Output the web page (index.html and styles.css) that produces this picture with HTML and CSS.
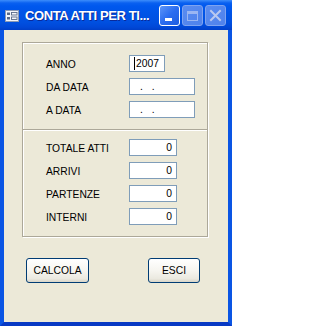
FILE: index.html
```html
<!DOCTYPE html>
<html>
<head>
<meta charset="utf-8">
<link rel="stylesheet" href="styles.css">
</head>
<body>
<div class="window">
  <div class="titlebar">
    <svg class="app-icon" width="14" height="12" viewBox="0 0 14 12">
      <rect x="0.5" y="0.5" width="13" height="11" fill="#f4f6fb" stroke="#8c9ab4"/>
      <rect x="2" y="2.5" width="3" height="2.5" fill="#5a6a88"/>
      <rect x="6.5" y="2.5" width="5.5" height="2.5" fill="none" stroke="#5a6a88" stroke-width="0.9"/>
      <rect x="2" y="7" width="3" height="2.5" fill="#5a6a88"/>
      <rect x="6.5" y="7" width="5.5" height="2.5" fill="none" stroke="#5a6a88" stroke-width="0.9"/>
    </svg>
    <span class="title">CONTA ATTI PER TI...</span>
    <div class="ctrls">
      <span class="ctrl ctrl-min"><span class="min-bar"></span></span>
      <span class="ctrl ctrl-off"><span class="max-box"></span></span>
      <span class="ctrl ctrl-off">
        <svg width="13" height="13" viewBox="0 0 13 13"><path d="M2 2 L11 11 M11 2 L2 11" stroke="#b9c8ef" stroke-width="2" stroke-linecap="square"/></svg>
      </span>
    </div>
  </div>
  <div class="client">
    <div class="frame">
      <div class="section">
        <div class="row"><span class="lbl">ANNO</span><span class="box box-year"><span class="caret"></span>2007</span></div>
        <div class="row"><span class="lbl">DA DATA</span><span class="box box-date">. .</span></div>
        <div class="row"><span class="lbl">A DATA</span><span class="box box-date">. .</span></div>
      </div>
      <div class="section section-sep">
        <div class="row"><span class="lbl">TOTALE ATTI</span><span class="box box-num">0</span></div>
        <div class="row"><span class="lbl">ARRIVI</span><span class="box box-num">0</span></div>
        <div class="row"><span class="lbl">PARTENZE</span><span class="box box-num">0</span></div>
        <div class="row"><span class="lbl">INTERNI</span><span class="box box-num">0</span></div>
      </div>
    </div>
    <div class="buttons">
      <span class="btn btn-calc">CALCOLA</span>
      <span class="btn btn-esci">ESCI</span>
    </div>
  </div>
</div>
</body>
</html>
```
FILE: styles.css
```css
html, body {
  margin: 0;
  padding: 0;
  background: #ffffff;
}
.window {
  width: 232px;
  height: 326px;
  display: flex;
  flex-direction: column;
  font-family: "Liberation Sans", Arial, sans-serif;
}
.titlebar {
  height: 30px;
  flex: none;
  display: flex;
  align-items: center;
  padding-left: 5px;
  box-sizing: border-box;
  background: linear-gradient(#3d8dfb 0px, #0a60f0 3px, #0058ee 6px, #0054e6 14px, #0050e0 22px, #0048d8 27px, #003fc8 30px);
}
.app-icon {
  flex: none;
  margin-top: 1px;
}
.title {
  margin-left: 6px;
  color: #ffffff;
  font-weight: bold;
  font-size: 13px;
  letter-spacing: -0.4px;
  text-shadow: 1px 1px 0 #0a2a9a;
  white-space: nowrap;
  flex: 1;
}
.ctrls {
  display: flex;
  gap: 2px;
  margin-right: 6px;
  margin-top: 1px;
}
.ctrl {
  width: 21px;
  height: 21px;
  box-sizing: border-box;
  border-radius: 3px;
  display: flex;
  align-items: center;
  justify-content: center;
  position: relative;
}
.ctrl-min {
  border: 1px solid #ffffff;
  background: linear-gradient(135deg, #5d95f8 0%, #2a6cf0 50%, #1d5de0 100%);
}
.min-bar {
  position: absolute;
  left: 5px;
  bottom: 4px;
  width: 7px;
  height: 3px;
  background: #ffffff;
}
.ctrl-off {
  border: 1px solid #7ea3f0;
  background: linear-gradient(135deg, #5a8cf0 0%, #4f82ec 100%);
}
.max-box {
  width: 11px;
  height: 10px;
  box-sizing: border-box;
  border: 1px solid #9bb6f2;
  border-top-width: 3px;
}
.client {
  flex: 1;
  background: #ece9d8;
  border-left: 4px solid #0a55e4;
  border-right: 4px solid #0a55e4;
  border-bottom: 4px solid #0839c4;
  display: flex;
  flex-direction: column;
}
.frame {
  margin-top: 12px;
  margin-left: 18px;
  width: 186px;
  box-sizing: border-box;
  border: 1px solid #aca899;
  box-shadow: 1px 1px 0 #ffffff, inset 1px 1px 0 #ffffff;
}
.section {
  display: flex;
  flex-direction: column;
  gap: 6px;
  padding: 12px 0 11px 23px;
}
.section-sep {
  border-top: 1px solid #aca899;
  box-shadow: inset 0 1px 0 #ffffff;
  padding-top: 9px;
  padding-bottom: 11px;
}
.row {
  display: flex;
  align-items: center;
  height: 17px;
}
.lbl {
  width: 83px;
  font-size: 10.3px;
  color: #000000;
  padding-top: 1px;
}
.box {
  height: 17px;
  box-sizing: border-box;
  border: 1px solid #7f9db9;
  background: #ffffff;
  font-size: 10.3px;
  color: #000000;
  display: flex;
  align-items: center;
}
.box-year {
  width: 36px;
  padding-left: 4px;
}
.caret {
  width: 1px;
  height: 13px;
  background: #000000;
  margin-right: 1px;
}
.box-date {
  width: 66px;
  padding-left: 10px;
  letter-spacing: 3px;
}
.box-num {
  width: 48px;
  justify-content: flex-end;
  padding-right: 4px;
}
.buttons {
  display: flex;
  justify-content: space-between;
  margin-top: 21px;
  padding-left: 22px;
  padding-right: 28px;
}
.btn {
  height: 25px;
  box-sizing: border-box;
  border: 1px solid #003c74;
  border-radius: 3px;
  background: linear-gradient(#ffffff 0%, #f6f5f0 50%, #ebe9e0 85%, #d8d5c8 100%);
  font-size: 10.3px;
  color: #000000;
  display: flex;
  align-items: center;
  justify-content: center;
}
.btn-calc {
  width: 63px;
}
.btn-esci {
  width: 52px;
}
```
